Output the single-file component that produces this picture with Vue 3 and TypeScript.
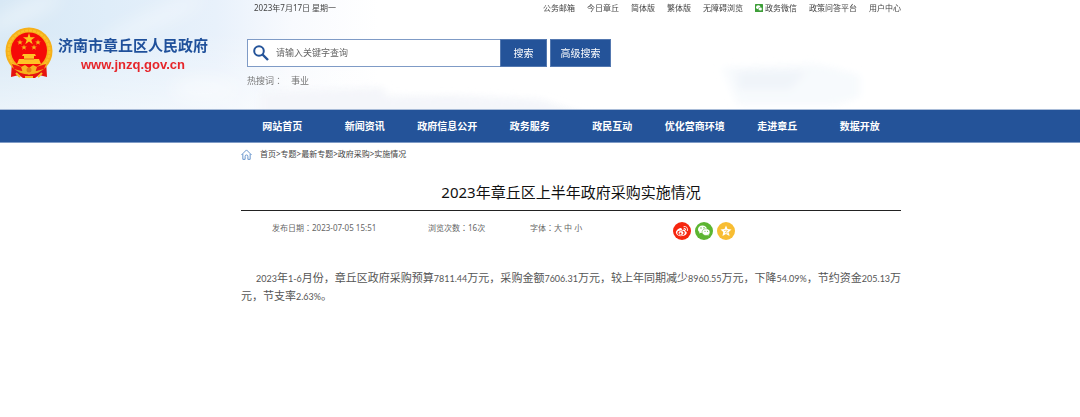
<script setup lang="ts">
import { ref } from 'vue'

interface TopLink {
  label: string
  wechat?: boolean
}

const topLinks: TopLink[] = [
  { label: '公务邮箱' },
  { label: '今日章丘' },
  { label: '简体版' },
  { label: '繁体版' },
  { label: '无障碍浏览' },
  { label: '政务微信', wechat: true },
  { label: '政策问答平台' },
  { label: '用户中心' },
]

const navItems: string[] = [
  '网站首页', '新闻资讯', '政府信息公开', '政务服务',
  '政民互动', '优化营商环境', '走进章丘', '数据开放',
]

const crumbs: string[] = ['首页', '专题', '最新专题', '政府采购', '实施情况']
const sizes: string[] = ['大', '中', '小']
const keyword = ref('')

const paragraph =
  '2023年1-6月份，章丘区政府采购预算7811.44万元，采购金额7606.31万元，较上年同期减少8960.55万元，下降54.09%，节约资金205.13万元，节支率2.63%。'
const parts: string[] = paragraph.split(/([0-9.%-]+|万)/).filter((p) => p.length > 0)
const isNumber = (p: string): boolean => /^[0-9]/.test(p)
</script>

<template>
  <div class="page">
    <header class="header">
      <svg class="sky" viewBox="0 0 1080 110" preserveAspectRatio="none" aria-hidden="true">
        <defs>
          <linearGradient id="skyBase" x1="0" y1="0" x2="1" y2="0">
            <stop offset="0" stop-color="#d7e8f5" />
            <stop offset="0.1" stop-color="#dfedf9" />
            <stop offset="0.2" stop-color="#e8f1fb" />
            <stop offset="0.27" stop-color="#f8fafe" />
            <stop offset="0.35" stop-color="#ffffff" />
            <stop offset="1" stop-color="#ffffff" />
          </linearGradient>
          <linearGradient id="skyFade" x1="0" y1="0" x2="0" y2="1">
            <stop offset="0.3" stop-color="#ffffff" stop-opacity="0" />
            <stop offset="1" stop-color="#ffffff" stop-opacity="0.5" />
          </linearGradient>
          <filter id="soft" filterUnits="userSpaceOnUse" x="-60" y="-60" width="500" height="240">
            <feGaussianBlur stdDeviation="9" />
          </filter>
          <filter id="mist" filterUnits="userSpaceOnUse" x="200" y="20" width="800" height="140">
            <feGaussianBlur stdDeviation="4" />
          </filter>
        </defs>
        <rect width="1080" height="110" fill="url(#skyBase)" />
        <rect width="1080" height="110" fill="url(#skyFade)" />
        <g filter="url(#soft)" fill="#ffffff">
          <ellipse cx="22" cy="14" rx="44" ry="7" opacity="0.5" transform="rotate(-25 22 14)" />
          <ellipse cx="150" cy="22" rx="60" ry="8" opacity="0.4" transform="rotate(-25 150 22)" />
          <ellipse cx="205" cy="90" rx="34" ry="12" opacity="0.45" />
        </g>
        <g filter="url(#mist)">
          <path d="M260 120V92L385 88V97L450 96L540 100L600 120Z" fill="#f4f6fa" />
          <path d="M722 68L815 64L840 70L860 76V98L836 106H738Z" fill="#f7fafd" />
          <path d="M738 72H806L790 90H738Z" fill="#f0f4f9" />
        </g>
      </svg>

      <a class="brand" href="#">
        <svg class="emblem" viewBox="0 0 48 52" aria-hidden="true">
          <path d="M7 34L6 50L14 48L18 51H30L34 48L42 50L41 34Z" fill="#e5140f" />
          <circle cx="24" cy="24" r="23.500" fill="#f6b01a" />
          <circle cx="24" cy="24" r="20.500" fill="none" stroke="#fbc02a" stroke-width="2" stroke-dasharray="3 1" />
          <circle cx="24" cy="23.500" r="18" fill="#f50a08" />
          <path d="M24 6L25.400 10.300H30L26.300 13L27.700 17.300L24 14.600L20.300 17.300L21.700 13L18 10.300H22.600Z" fill="#fcc51e" />
          <g fill="#f7b51d">
            <path id="smallStar" d="M15 12.500L15.700 14.500H17.800L16.200 15.800L16.800 17.800L15 16.600L13.200 17.800L13.800 15.800L12.200 14.500H14.300Z" />
            <use href="#smallStar" x="18" />
            <use href="#smallStar" x="4" y="5" />
            <use href="#smallStar" x="14" y="5" />
          </g>
          <path d="M18 27H30L31 29H29V32H34L36 37H12L14 32H19V29H17Z" fill="#ffc226" />
          <path d="M19 32H29" stroke="#e8641a" />
          <path d="M7 37Q24 44 41 37L39 42Q24 47 9 42Z" fill="#ee1a10" />
          <path d="M16 40L20 38L24 41L28 38L32 40L30 46L26 45L24 48L22 45L18 46Z" fill="#f7b423" />
          <circle cx="24" cy="43" r="2.500" fill="#e77917" />
          <path d="M11 46L15 50M37 46L33 50M20 50H28" stroke="#f9bf2b" stroke-width="2" />
        </svg>
        <span class="brand-text">
          <span class="brand-name">济南市章丘区人民政府</span>
          <span class="brand-url">www.jnzq.gov.cn</span>
        </span>
      </a>

      <div class="head-main">
        <div class="topbar">
          <span>2023年7月17日 星期一</span>
          <nav class="top-links" aria-label="快捷链接">
            <a v-for="l in topLinks" :key="l.label" href="#">
              <svg v-if="l.wechat" class="wx" viewBox="0 0 16 16" aria-hidden="true">
                <rect width="16" height="16" rx="1" fill="#3d9e38" />
                <ellipse cx="6.500" cy="6.500" rx="4.500" ry="3.800" fill="#fff" />
                <ellipse cx="10.500" cy="10" rx="4" ry="3.300" fill="#fff" stroke="#3d9e38" />
              </svg>{{ l.label }}</a>
          </nav>
        </div>
        <form class="search" @submit.prevent>
          <label class="box">
            <svg viewBox="0 0 16 16" aria-hidden="true">
              <circle cx="6" cy="6" r="4.800" fill="none" stroke="#245399" stroke-width="2" />
              <path d="M9.500 9.500L15 15" stroke="#245399" stroke-width="2.400" />
            </svg>
            <input v-model="keyword" type="text" placeholder="请输入关键字查询" aria-label="请输入关键字查询" />
          </label>
          <button type="submit">搜索</button>
          <button class="advanced" type="button">高级搜索</button>
        </form>
        <p class="hot"><span>热搜词<span class="colon">：</span></span><a href="#">事业</a></p>
      </div>
    </header>

    <nav class="nav" aria-label="主导航">
      <a v-for="n in navItems" :key="n" href="#">{{ n }}</a>
    </nav>

    <main class="main">
      <div class="crumbs">
        <svg viewBox="0 0 12 12" aria-hidden="true">
          <path d="M0.500 6.500L6 1L11.500 6.500M2 5.500V11.300H4.500V8Q4.500 6.500 6 6.500T7.500 8V11.300H10V5.500" fill="none" stroke="#5c8cc8" />
        </svg>
        <span>
          <template v-for="(c, i) in crumbs" :key="c"><template v-if="i">&gt;</template><a href="#">{{ c }}</a></template>
        </span>
      </div>

      <article>
        <h1>2023年章丘区上半年政府采购实施情况</h1>
        <div class="meta">
          <span>发布日期<span class="colon">：</span>2023-07-05 15:51</span>
          <span>浏览次数<span class="colon">：</span>16次</span>
          <span class="sizes">字体<span class="colon">：</span><template v-for="(s, i) in sizes" :key="s"><template v-if="i">&nbsp;</template><button type="button">{{ s }}</button></template></span>
          <div class="share">
            <a href="#" aria-label="微博">
              <svg viewBox="0 0 36 36">
                <circle cx="18" cy="18" r="18" fill="#f6260f" />
                <path d="M15 12C10 13 5 18 6 22C7 27 13 29 19 28C25 27 29 23 27 20C26 18 24 19 24 18C25 15 22 14 18 16C18 14 18 12 15 12Z" fill="#fff" />
                <ellipse cx="16" cy="22" rx="7.500" ry="4.800" fill="#f6260f" />
                <ellipse cx="16" cy="22" rx="5" ry="4" fill="#fff" />
                <circle cx="15" cy="23" r="2" fill="#f6260f" />
                <path d="M22 9Q30 8 29 17M22 12.500Q26 12 25.500 16" fill="none" stroke="#fff" stroke-width="1.800" stroke-linecap="round" />
              </svg>
            </a>
            <a href="#" aria-label="微信">
              <svg viewBox="0 0 36 36">
                <circle cx="18" cy="18" r="18" fill="#5cb531" />
                <path d="M15 7C9 7 6 11 6 14.500C6 17 7 19 9 20L8 23L12 21.500Q15 22.500 18 21.500C22 20 24 18 24 14C23 10 20 7 15 7Z" fill="#fff" />
                <path d="M22 13.500C17 13.500 14 17 14 20C14 24 18 27 22 27L25 26.500L28 28L27.500 25.500C29 24 30 22 30 20C30 16.500 27 13.500 22 13.500Z" fill="#fff" stroke="#5cb531" />
                <g fill="#5cb531">
                  <circle cx="12" cy="12" r="1.300" />
                  <circle cx="18" cy="11.500" r="1.300" />
                  <circle cx="20" cy="18.500" r="1.100" />
                  <circle cx="25" cy="18.500" r="1.100" />
                </g>
              </svg>
            </a>
            <a href="#" aria-label="QQ空间">
              <svg viewBox="0 0 36 36">
                <circle cx="18" cy="18" r="18" fill="#f8bd32" />
                <path d="M18 7L21 14L29 15L23.500 20L25 28L18 24L11 28L12.500 20L7 15L15 14Z" fill="#fff" />
                <path d="M14 17Q18 16 21.500 17L16 21.500Q20 22.300 23.500 21.500" fill="none" stroke="#f8bd32" stroke-width="1.200" />
              </svg>
            </a>
          </div>
        </div>
        <p class="body"><span v-for="(p, i) in parts" :key="i" :class="{ num: isNumber(p) }">{{ p }}</span></p>
      </article>
    </main>
  </div>
</template>

<style>
body {
  margin: 0;
  background: #fff;
}
</style>

<style scoped>
.page {
  --blue: #245399;
  --left: 241px;
  --right: 179px;
  font: 8px/16px "Noto Sans", "Noto Sans CJK SC", sans-serif;
  color: #444;
}
a {
  color: inherit;
  text-decoration: none;
}
button,
input {
  margin: 0;
  padding: 0;
  border: 0;
  font: inherit;
  color: inherit;
}
svg {
  display: block;
  flex: none;
}
.colon {
  font-family: "Noto Sans CJK TC", sans-serif;
}
.header {
  position: relative;
  display: grid;
  grid-template-columns: var(--left) 1fr;
  height: 109px;
  border-bottom: 1px solid #a9bcd8;
}
.sky {
  position: absolute;
  inset: 0;
  width: 100%;
  height: 100%;
}
.brand {
  position: relative;
  display: flex;
  align-items: flex-start;
  gap: 5px;
  padding: 27px 0 0 5px;
}
.emblem {
  width: 48px;
  height: 52px;
}
.brand-text {
  display: flex;
  flex-direction: column;
  align-items: center;
  padding-top: 8px;
  white-space: nowrap;
}
.brand-name {
  font-size: 15px;
  line-height: 20px;
  font-weight: 700;
  color: #1f509b;
}
.brand-url {
  font: 700 13px/20px "Liberation Sans", Arial, sans-serif;
  color: #e6262b;
}
.head-main {
  position: relative;
  padding: 0 var(--right) 0 6px;
}
.topbar {
  display: flex;
  justify-content: space-between;
  padding-left: 7px;
}
.top-links {
  display: flex;
  gap: 12px;
}
.top-links a {
  display: flex;
  align-items: center;
  gap: 2px;
}
.wx {
  width: 8px;
  height: 8px;
}
.search {
  display: flex;
  height: 28px;
  margin-top: 23px;
  font-size: 10px;
}
.box {
  display: flex;
  align-items: center;
  gap: 7px;
  box-sizing: border-box;
  width: 253px;
  padding-left: 5px;
  border: 1px solid #7f9bc6;
  border-right: 0;
  background: #fff;
}
.box svg {
  width: 16px;
  height: 16px;
}
.box input {
  flex: 1;
  min-width: 0;
  font-size: 9px;
  background: transparent;
  outline: 0;
}
.box input::placeholder {
  color: #666;
  opacity: 1;
}
.search button {
  width: 47px;
  background: var(--blue);
  border: 1px solid #5378b0;
  color: #fff;
}
.search .advanced {
  width: 61px;
  margin-left: 3px;
}
.hot {
  display: flex;
  gap: 8px;
  margin: 6px 0 0;
  font-size: 9px;
  color: #777;
}
.nav {
  display: grid;
  grid-template-columns: repeat(8, 1fr);
  padding: 0 var(--right) 0 var(--left);
  background: var(--blue);
  border-bottom: 1px solid #7f9bc6;
  color: #fff;
  font-size: 10px;
  line-height: 32px;
  font-weight: 700;
  text-align: center;
}
.main {
  padding: 0 var(--right) 0 var(--left);
}
.crumbs {
  display: flex;
  align-items: center;
  gap: 8px;
  height: 22px;
}
.crumbs svg {
  width: 11px;
  height: 11px;
}
h1 {
  margin: 14px 0 0;
  padding: 1px 0 6px;
  border-bottom: 1px solid #222;
  font-size: 15px;
  line-height: 24px;
  font-weight: 400;
  text-align: center;
  color: #111;
}
.meta {
  display: grid;
  grid-template-columns: 156px 102px 143px 1fr;
  align-items: start;
  padding: 9px 0 0 31px;
  color: #666;
}
.sizes button {
  background: none;
}
.share {
  display: flex;
  gap: 4px;
  padding-top: 2px;
}
.share svg {
  width: 18px;
  height: 18px;
}
.body {
  margin: 29px 0 0;
  font-size: 11px;
  line-height: 17px;
  text-indent: 15px;
  text-align: justify;
  color: #555;
}
.num {
  font-family: Lato, "Noto Sans", sans-serif;
  font-size: 9px;
}
</style>
